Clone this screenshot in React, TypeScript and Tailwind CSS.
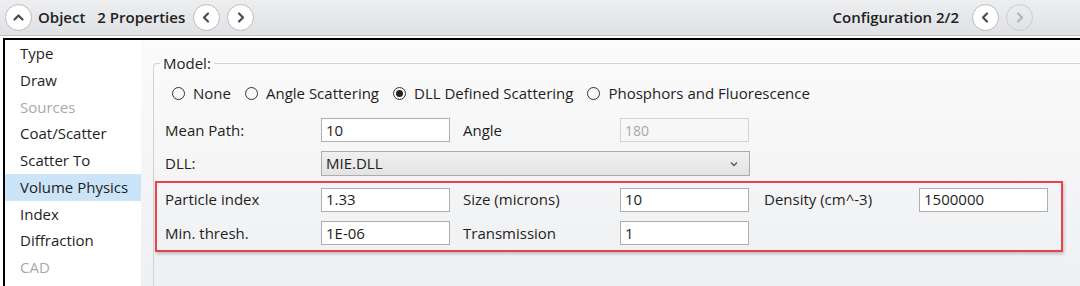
import React from 'react';

const font = { fontFamily: '"Open Sans", "Noto Sans", sans-serif' };

function RoundButton({ dir, disabled }: { dir: 'up' | 'left' | 'right'; disabled?: boolean }) {
  const d =
    dir === 'up' ? 'M4.5 10.5 L8.5 6.5 L12.5 10.5' : dir === 'left' ? 'M10 4.5 L6 8.5 L10 12.5' : 'M7 4.5 L11 8.5 L7 12.5';
  return (
    <div
      className={`w-[27px] h-[27px] rounded-full border flex items-center justify-center shrink-0 ${
        disabled ? 'border-[#c9cbcf] bg-transparent' : 'border-[#b9bbbf] bg-white'
      }`}
    >
      <svg width="17" height="17" viewBox="0 0 17 17">
        <path d={d} fill="none" stroke={disabled ? '#b4b6ba' : '#4a4a4a'} strokeWidth="2.2" strokeLinecap="round" strokeLinejoin="round" />
      </svg>
    </div>
  );
}

function Radio({ label, checked }: { label: string; checked?: boolean }) {
  return (
    <div className="flex items-center mr-[14px]">
      <div className="w-[13px] h-[13px] rounded-full border border-[#333] flex items-center justify-center mr-[8px]">
        {checked && <div className="w-[7px] h-[7px] rounded-full bg-[#222]" />}
      </div>
      <span>{label}</span>
    </div>
  );
}

function Field({ value, disabled }: { value: string; disabled?: boolean }) {
  return (
    <div
      className={`w-[129px] h-[24px] border flex items-center pl-[4px] ${
        disabled ? 'border-[#d3d3d3] bg-[#f7f7f7] text-[#a8a8a8] text-[14px]' : 'border-[#aeaeae] bg-white text-[#1e1e1e]'
      }`}
    >
      {value}
    </div>
  );
}

const sideItems = [
  { name: 'Type' },
  { name: 'Draw' },
  { name: 'Sources', off: true },
  { name: 'Coat/Scatter' },
  { name: 'Scatter To' },
  { name: 'Volume Physics', active: true },
  { name: 'Index' },
  { name: 'Diffraction' },
  { name: 'CAD', off: true },
];

export default function App() {
  return (
    <div className="w-[1080px] h-[286px] overflow-hidden bg-white text-[15px] text-[#1e1e1e] flex flex-col" style={font}>
      {/* top bar */}
      <div className="h-[36px] shrink-0 flex items-center pl-[5px] pr-[47px] bg-gradient-to-b from-[#eceef0] to-[#dfe1e4] border-b border-[#c4c6ca]">
        <RoundButton dir="up" />
        <span className="ml-[6px] font-semibold text-[15px] text-[#222]">Object</span>
        <span className="ml-[12px] font-semibold text-[15px] text-[#222]">2 Properties</span>
        <div className="ml-[8px] flex gap-[7px]">
          <RoundButton dir="left" />
          <RoundButton dir="right" />
        </div>
        <div className="flex-1" />
        <span className="font-semibold text-[15px] text-[#222]">Configuration 2/2</span>
        <div className="ml-[13px] flex gap-[7px]">
          <RoundButton dir="left" />
          <RoundButton dir="right" disabled />
        </div>
      </div>
      <div className="h-[2px] shrink-0 bg-white" />

      <div className="flex-1 flex ml-[3px] border-l-2 border-t-2 border-black min-h-0">
        {/* sidebar */}
        <div className="w-[136px] shrink-0 bg-white">
          {sideItems.map((it) => (
            <div
              key={it.name}
              className={`h-[26.75px] flex items-center pl-[15px] ${it.active ? 'bg-[#cce4f7]' : ''} ${
                it.off ? 'text-[#a9a9a9]' : 'text-[#1e1e1e]'
              }`}
            >
              {it.name}
            </div>
          ))}
        </div>

        {/* content */}
        <div className="flex-1 bg-gradient-to-b from-[#fbfbfb] to-[#eff0f2] pl-[12px] pt-[13px]">
          <fieldset className="border-t border-l border-[#d2d3d6] rounded-tl-[4px] h-full pl-[11px]">
            <legend className="-ml-[5px] px-[3px] leading-[20px]">Model:</legend>
            <div className="flex items-center h-[40px] pl-[7px]">
              <Radio label="None" />
              <Radio label="Angle Scattering" />
              <Radio label="DLL Defined Scattering" checked />
              <Radio label="Phosphors and Fluorescence" />
            </div>
            <div className="flex items-center h-[34px]">
              <span className="w-[156px]">Mean Path:</span>
              <Field value="10" />
              <span className="ml-[13px] w-[157px]">Angle</span>
              <Field value="180" disabled />
            </div>
            <div className="flex items-center h-[33px]">
              <span className="w-[156px]">DLL:</span>
              <div className="w-[429px] h-[25px] border border-[#acacac] bg-gradient-to-b from-[#f0f0f0] to-[#e3e3e3] flex items-center pl-[4px] pr-[10px]">
                <span className="flex-1">MIE.DLL</span>
                <svg width="10" height="10" viewBox="0 0 10 10">
                  <path d="M2 3.5 L5 6.5 L8 3.5" fill="none" stroke="#555" strokeWidth="1.3" />
                </svg>
              </div>
            </div>
            <div className="-ml-[10px] mt-[1px] w-[908px] h-[71px] border-2 border-[#e8434a] shadow-[1px_2px_3px_rgba(0,0,0,0.22)] pl-[8px]">
              <div className="flex items-center h-[33px]">
                <span className="w-[156px]">Particle index</span>
                <Field value="1.33" />
                <span className="ml-[13px] w-[157px]">Size (microns)</span>
                <Field value="10" />
                <span className="ml-[15px] w-[155px]">Density (cm^-3)</span>
                <Field value="1500000" />
              </div>
              <div className="flex items-center h-[34px]">
                <span className="w-[156px]">Min. thresh.</span>
                <Field value="1E-06" />
                <span className="ml-[13px] w-[157px]">Transmission</span>
                <Field value="1" />
              </div>
            </div>
          </fieldset>
        </div>
      </div>
    </div>
  );
}
